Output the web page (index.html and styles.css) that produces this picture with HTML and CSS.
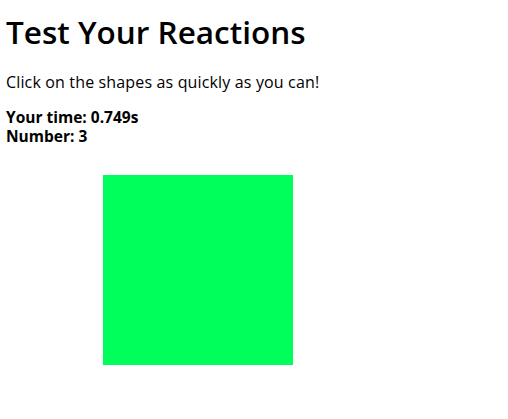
FILE: index.html
```html
<!DOCTYPE html>
<html>
<head>
<meta charset="utf-8">
<link rel="stylesheet" href="styles.css">
</head>
<body>
<h1 class="title">Test Your Reactions</h1>
<p class="intro">Click on the shapes as quickly as you can!</p>
<p class="stats">Your time: <span class="time">0.749s</span><br>Number: <span class="count">3</span></p>
<div class="shape"></div>
</body>
</html>
```
FILE: styles.css
```css
html, body {
  margin: 0;
  background: #fff;
}
body {
  padding: 0 6px;
  font-family: "Open Sans", sans-serif;
  color: #000;
}
.title {
  margin: 0;
  padding-top: 10px;
  font-size: 31.5px;
  font-weight: 600;
  line-height: 44px;
}
.intro {
  margin: 18px 0 0;
  font-size: 16px;
  letter-spacing: 0.15px;
  line-height: 20px;
}
.stats {
  margin: 16px 0 0;
  font-size: 15.5px;
  font-weight: 700;
  line-height: 19px;
}
.shape {
  width: 190px;
  height: 190px;
  margin: 29px 0 0 97px;
  background: #00ff5a;
}
```
